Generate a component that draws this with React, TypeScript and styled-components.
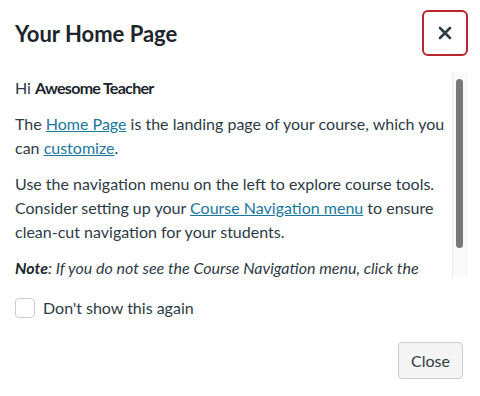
import React from "react";
import styled, { createGlobalStyle } from "styled-components";

const GlobalStyle = createGlobalStyle`
  html, body {
    margin: 0;
    padding: 0;
    background: #ffffff;
  }
  body {
    font-family: Lato, "Liberation Sans", sans-serif;
    color: #2d3b45;
  }
`;

const Dialog = styled.div`
  width: 480px;
  height: 396px;
  box-sizing: border-box;
  display: flex;
  flex-direction: column;
  background: #ffffff;
`;

const Header = styled.div`
  display: flex;
  align-items: center;
  justify-content: space-between;
  padding: 10px 12px 0 15px;
`;

const Title = styled.h2`
  margin: 0;
  font-size: 22px;
  font-weight: 700;
  color: #1c252c;
`;

const CloseX = styled.button`
  width: 46px;
  height: 46px;
  box-sizing: border-box;
  border: 2px solid #b82630;
  border-radius: 6px;
  background: #ffffff;
  display: flex;
  align-items: center;
  justify-content: center;
  padding: 0;
  cursor: pointer;
`;

const ScrollArea = styled.div`
  display: flex;
  margin: 17px 13px 0 15px;
  height: 204px;
`;

const Content = styled.div`
  flex: 1;
  min-width: 0;
  overflow: hidden;
  padding-top: 3px;
  font-size: 16px;
  line-height: 24px;
`;

const Track = styled.div`
  width: 15px;
  box-sizing: border-box;
  flex: none;
  background: #fafafa;
  border-left: 1px solid #ececec;
  border-right: 1px solid #f2f2f2;
  padding: 6px 3px 0;
`;

const Thumb = styled.div<{ $size: number }>`
  height: ${(p) => p.$size}px;
  background: #777777;
  border-radius: 4px;
`;

const Para = styled.p`
  margin: 0 0 12px;
`;

const Name = styled.strong`
  font-weight: 700;
  letter-spacing: -0.7px;
  color: #1c252c;
`;

const Link = styled.a`
  color: #1a77a0;
  text-decoration: underline;
`;

const Note = styled.p`
  margin: 0 0 12px;
  font-style: italic;
  strong {
    font-weight: 700;
    color: #1c252c;
  }
`;

const CheckRow = styled.label`
  display: flex;
  align-items: center;
  gap: 8px;
  margin: 21px 15px 0;
  font-size: 16px;
  line-height: 20px;
`;

const Box = styled.span`
  width: 20px;
  height: 20px;
  box-sizing: border-box;
  border: 1px solid #c7cdd1;
  border-radius: 4px;
  background: #ffffff;
`;

const Footer = styled.div`
  display: flex;
  justify-content: flex-end;
  padding: 24px 17px 0;
`;

const Button = styled.button`
  height: 37px;
  padding: 0 12px;
  box-sizing: border-box;
  background: #f5f5f5;
  border: 1px solid #c7cdd1;
  border-radius: 4px;
  font-family: Lato, "Liberation Sans", sans-serif;
  font-size: 16px;
  color: #2d3b45;
`;

export default function App() {
  return (
    <>
      <GlobalStyle />
      <Dialog>
        <Header>
          <Title>Your Home Page</Title>
          <CloseX aria-label="Close">
            <svg width="14" height="14" viewBox="0 0 14 14">
              <path
                d="M2 2 L12 12 M12 2 L2 12"
                stroke="#2d3b45"
                strokeWidth="2.6"
                strokeLinecap="round"
              />
            </svg>
          </CloseX>
        </Header>
        <ScrollArea>
          <Content>
            <Para>
              Hi <Name>Awesome Teacher</Name>
            </Para>
            <Para>
              The <Link href="#">Home Page</Link> is the landing page of your
              course, which you can <Link href="#">customize</Link>.
            </Para>
            <Para>
              Use the navigation menu on the left to explore course tools.
              Consider setting up your{" "}
              <Link href="#">Course Navigation menu</Link> to ensure clean-cut
              navigation for your students.
            </Para>
            <Note>
              <strong>Note</strong>: If you do not see the Course Navigation
              menu, click the menu button.
            </Note>
          </Content>
          <Track>
            <Thumb $size={169} />
          </Track>
        </ScrollArea>
        <CheckRow>
          <Box />
          Don't show this again
        </CheckRow>
        <Footer>
          <Button>Close</Button>
        </Footer>
      </Dialog>
    </>
  );
}
